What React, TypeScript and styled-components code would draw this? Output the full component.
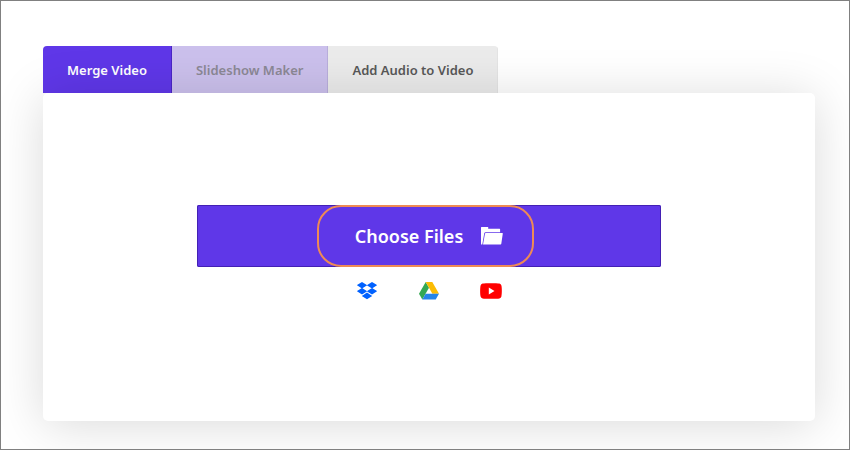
import React, { useState } from "react";
import styled, { createGlobalStyle } from "styled-components";

const GlobalStyle = createGlobalStyle`
  *, *::before, *::after { box-sizing: border-box; }
  body {
    margin: 0;
    background: #fff;
    font-family: "Noto Sans", "Open Sans", sans-serif;
  }
`;

const Page = styled.main`
  display: flex;
  flex-direction: column;
  min-height: 100vh;
  padding: 45px 34px 28px 42px;
  border: 1px solid #808080;
  overflow: hidden;
`;

const TabList = styled.div`
  display: flex;
  align-self: flex-start;
  border-radius: 4px 4px 0 0;
  overflow: hidden;
`;

type Tone = "active" | "hover" | "plain";

const tones: Record<Tone, { bg: string; text: string; edge: string }> = {
  active: { bg: "#5f37e8", text: "#ffffff", edge: "#4a25c4" },
  hover: { bg: "#cbc0ec", text: "#8b8895", edge: "#b9aedb" },
  plain: { bg: "#ebebeb", text: "#585858", edge: "#e4e4e4" },
};

const Tab = styled.button<{ $tone: Tone }>`
  height: 47px;
  padding: 0 24px;
  border: 0;
  border-right: 1px solid ${(p) => tones[p.$tone].edge};
  background: ${(p) => tones[p.$tone].bg};
  color: ${(p) => tones[p.$tone].text};
  font: 600 13px/20px "Noto Sans", "Open Sans", sans-serif;
  white-space: nowrap;
  cursor: pointer;
`;

const Card = styled.section`
  position: relative;
  flex: 1;
  display: flex;
  flex-direction: column;
  align-items: center;
  padding: 112px 0 100px;
  border-radius: 5px;
  background: #fff;
  box-shadow: 0 4px 50px rgba(0, 0, 0, 0.15);
`;

const ChooseButton = styled.button`
  display: flex;
  justify-content: center;
  width: 60%;
  padding: 0;
  border: 0;
  border-radius: 2px;
  background: #5f37e8;
  box-shadow: inset 0 0 0 1px #4320b4;
  color: #fff;
  font: 600 18px/24px "Noto Sans", "Open Sans", sans-serif;
  cursor: pointer;
`;

const Highlight = styled.span`
  display: flex;
  align-items: center;
  gap: 18px;
  height: 62px;
  margin-right: 7px;
  padding: 0 29px 0 36px;
  border: 2px solid #ee8a55;
  border-radius: 24px;
`;

const Sources = styled.div`
  display: flex;
  gap: 38px;
  margin-top: 12px;
`;

const SourceButton = styled.button`
  display: flex;
  align-items: center;
  justify-content: center;
  width: 24px;
  height: 24px;
  padding: 0;
  border: 0;
  background: none;
  cursor: pointer;
`;

const FolderIcon = () => (
  <svg width="22" height="18" viewBox="0 0 22 18" aria-hidden="true">
    <path fill="#fff" d="M.5 0h6.7v1.8H18.6a.5.5 0 0 1 .5.5v3H4.6a1.5 1.5 0 0 0-1.4 1.2L1.3 17.4H.5a.5.5 0 0 1-.5-.5V.5A.5.5 0 0 1 .5 0z" />
    <path fill="#fff" d="M4.8 6H21.3a.5.5 0 0 1 .5.6L20.3 16.7a.8.8 0 0 1-.8.7H2L4 6.6a.8.8 0 0 1 .8-.6z" />
  </svg>
);

const DropboxIcon = () => (
  <svg width="20" height="18" viewBox="0 0 20 18" aria-hidden="true">
    <path
      fill="#0061ff"
      d="M5 0l5.2 3.2L5 6.4-.2 3.2zM15 0l5.2 3.2L15 6.4 9.8 3.2zM5 6l5.2 3.2L5 12.4-.2 9.2zM15 6l5.2 3.2-5.2 3.2-5.2-3.2zM10 10.6l5.2 3.3-5.2 3.4-5.2-3.4z"
    />
  </svg>
);

const DriveIcon = () => (
  <svg width="20" height="18" viewBox="0 0 20 18" aria-hidden="true">
    <path fill="#34a853" d="M6.7 0L10 5.8 3.3 17.6 0 11.8z" />
    <path fill="#fbbc04" d="M6.7 0h6.6L20 11.8h-6.6z" />
    <path fill="#2684e8" d="M6.6 11.8H20l-3.3 5.8H3.3z" />
  </svg>
);

const YouTubeIcon = () => (
  <svg width="22" height="16" viewBox="0 0 22 16" aria-hidden="true">
    <path
      fill="#f00"
      d="M2.6.6C5 0 17 0 19.4.6a2.7 2.7 0 0 1 2 2C22 5 22 11 21.4 13.4a2.7 2.7 0 0 1-2 2C17 16 5 16 2.6 15.4a2.7 2.7 0 0 1-2-2C0 11 0 5 .6 2.6a2.7 2.7 0 0 1 2-2z"
    />
    <path fill="#fff" d="M8.8 4.6l5.7 3.4-5.7 3.4z" />
  </svg>
);

const tabs: { label: string; tone: Tone }[] = [
  { label: "Merge Video", tone: "active" },
  { label: "Slideshow Maker", tone: "hover" },
  { label: "Add Audio to Video", tone: "plain" },
];

const sources = [
  { name: "Dropbox", Icon: DropboxIcon },
  { name: "Google Drive", Icon: DriveIcon },
  { name: "YouTube", Icon: YouTubeIcon },
];

export default function App() {
  const [selected, setSelected] = useState(0);
  const toneOf = (tone: Tone, index: number): Tone => {
    if (index === selected) return "active";
    return tone === "active" ? "plain" : tone;
  };

  return (
    <>
      <GlobalStyle />
      <Page>
        <TabList role="tablist">
          {tabs.map(({ label, tone }, i) => (
            <Tab
              key={label}
              id={`tab-${i}`}
              type="button"
              role="tab"
              aria-selected={i === selected}
              aria-controls="tool-panel"
              $tone={toneOf(tone, i)}
              onClick={() => setSelected(i)}
            >
              {label}
            </Tab>
          ))}
        </TabList>
        <Card id="tool-panel" role="tabpanel" aria-labelledby={`tab-${selected}`}>
          <ChooseButton type="button">
            <Highlight>
              Choose Files
              <FolderIcon />
            </Highlight>
          </ChooseButton>
          <Sources>
            {sources.map(({ name, Icon }) => (
              <SourceButton key={name} type="button" aria-label={name}>
                <Icon />
              </SourceButton>
            ))}
          </Sources>
        </Card>
      </Page>
    </>
  );
}
